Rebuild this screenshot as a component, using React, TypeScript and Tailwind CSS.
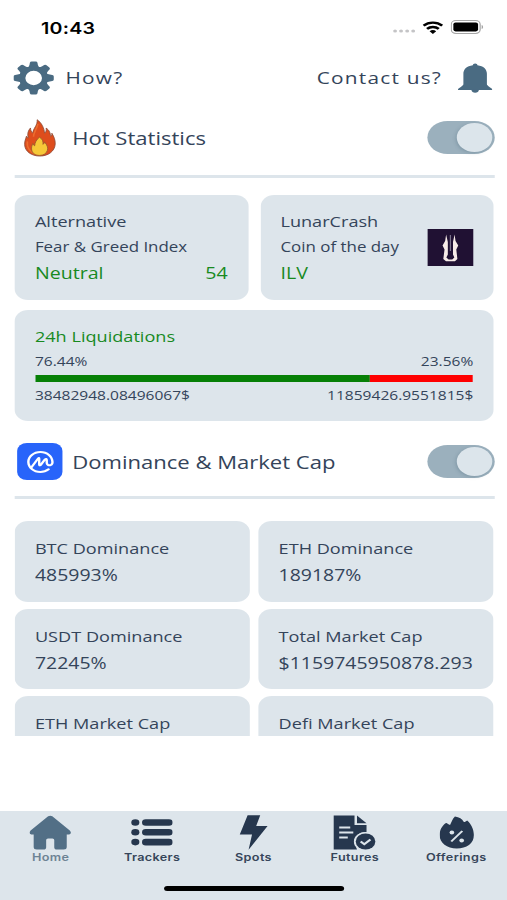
import type { ReactNode } from "react";
import { SiCoinmarketcap } from "react-icons/si";

interface Stat {
  label: string;
  value?: string;
}

const stats: Stat[] = [
  { label: "BTC Dominance", value: "485993%" },
  { label: "ETH Dominance", value: "189187%" },
  { label: "USDT Dominance", value: "72245%" },
  { label: "Total Market Cap", value: "$1159745950878.293" },
  { label: "ETH Market Cap" },
  { label: "Defi Market Cap" },
];

function StatusBar() {
  return (
    <div className="flex h-[54px] items-center justify-between pr-[19px] pl-[33.5px] text-black">
      <span className="mt-px font-['Inter',sans-serif] text-[16px] font-semibold tracking-[0.2px]">10:43</span>
      <div className="flex items-center">
        <svg width="18" height="12" viewBox="0 0 18 12" className="mt-[8px]">
          <g fill="#c4c4c6">
            <circle cx="1.6" cy="6" r="1.6" />
            <circle cx="6.5" cy="6" r="1.6" />
            <circle cx="11.5" cy="6" r="1.6" />
            <circle cx="16.4" cy="6" r="1.6" />
          </g>
        </svg>
        <svg width="17" height="13" viewBox="0 0 17 13" className="ml-[6px]">
          <g fill="none" stroke="#000" strokeWidth="2.3">
            <path d="M.9 4.6a11 11 0 0 1 15.2 0" />
            <path d="M3.7 7.9a7 7 0 0 1 9.6 0" />
          </g>
          <path d="M5.8 10.2a4 4 0 0 1 5.4 0L8.5 13z" />
        </svg>
        <svg width="27" height="14" viewBox="0 0 27 14" className="ml-[6px]">
          <rect x=".5" y=".6" width="23.6" height="12.8" rx="3.8" fill="none" stroke="#a6a6a6" />
          <rect x="2.2" y="2.6" width="20.2" height="8.8" rx="1.8" />
          <path d="M25.3 5v4c1.6-.6 1.6-3.4 0-4z" fill="#a6a6a6" />
        </svg>
      </div>
    </div>
  );
}

function GearIcon() {
  return (
    <svg width="33" height="34" viewBox="-16.5 -17 33 34" fill="#4a6b82">
      <path
        fillRule="evenodd"
        d="M-11.8 0a11.8 12 0 1 0 23.6 0a11.8 12 0 1 0-23.6 0zM-6.8 0a6.8 7.2 0 1 1 13.6 0a6.8 7.2 0 1 1-13.6 0z"
      />
      {[0, 45, 90, 135, 180, 225, 270, 315].map((angle) => (
        <path
          key={angle}
          transform={`rotate(${angle})`}
          d="M-5.2-10Q-3.6-11.2-3.4-13.2L-3.1-15.2Q-2.9-16.5-1.6-16.5H1.6Q2.9-16.5 3.1-15.2L3.4-13.2Q3.6-11.2 5.200-10z"
        />
      ))}
    </svg>
  );
}

function BellIcon() {
  return (
    <svg width="28" height="30" viewBox="0 0 28 30" fill="#4a6b82">
      <path d="M14 .6c1.200 0 1.700.9 1.900 1.700 4.900.8 7.700 4 7.700 8.500v10.200c0 1.200 1.200 2.200 4.400 5v1H0v-1c3.200-2.800 4.400-3.800 4.400-5V10.800c0-4.500 2.800-7.700 7.700-8.500.2-.8.700-1.700 1.900-1.700z" />
      <path d="M10.900 26.500h6.200c0 4.400-6.200 4.400-6.200 0z" />
    </svg>
  );
}

function FireIcon() {
  return (
    <svg width="27" height="38" viewBox="0 0 27 39">
      <path
        d="M11.300.8c3.900 3.300 5.700 8.200 6.200 13.800 1.300-1.200 1.700-3 1.300-5.200 3 2.200 3.400 5.200 3.800 8.500.9-.8 1.200-2 1-3.300 1.800 3.500 3 7.200 2.800 11.200C26 33 20.700 38 13.500 38S.8 33 .8 26c0-3.500.9-5.500 1.500-8.300.4.700.9 1.300 1.500 1.700-.8-4.300-.3-7.300 1.900-10.200.1 2.300.6 4 1.900 5.300C7.900 9.400 11.800 6.700 11.300.8z"
        fill="#de4d1d"
        stroke="#8f4c38"
        strokeWidth=".8"
      />
      <path d="M11.900 5c-.6 5-3.600 8-3.700 13.300M3.100 23c-.8 6.500 2.700 11.500 7 13" fill="none" stroke="#f27a36" strokeWidth="1.300" opacity=".7" />
      <path
        d="M13.200 18.700c2.400 1.500 3.300 4.200 3 7.300.8-.6 1.200-1.500 1.200-2.500 2.200 3 3.200 5.800 2.500 8.600-.8 3.400-3.300 5.300-6.700 5.300s-6.100-2.300-6.500-5.600c-.4-2.700.2-4.700 1-6.700.2 1.100.7 1.900 1.500 2.400.2-3.500 1.400-6.300 4-8.800z"
        fill="#f6c838"
        stroke="#9b5a2d"
        strokeWidth=".8"
      />
    </svg>
  );
}

function IlluviumLogo() {
  return (
    <svg width="37.500" height="37" viewBox="0 0 37.500 37">
      <rect width="37.500" height="37" fill="#201133" />
      <path
        d="M15.300 5.500L16.700 13V25.500L15.500 28.500L17.300 30.500H20.300L22 28.500L20.900 25.500V13L22.200 5.500L23 12L25.200 16.500L23.600 20.500L24.500 30L22.500 32.200H15.200L13 30L14 20.500L12.400 16.500L14.500 12z"
        fill="#f7ece8"
      />
      <path d="M18.800 6v16" stroke="#79718a" />
    </svg>
  );
}

function Toggle() {
  return (
    <div className="flex h-[33px] w-[54.200px] items-center justify-end rounded-full bg-[#9bb0bd] pr-[1.800px]">
      <div className="h-[29.500px] w-[28.800px] rounded-full bg-[#dce5eb] shadow-[-1px_1px_3px_rgba(60,90,110,0.25)]" />
    </div>
  );
}

function SectionHeader({ icon, title }: { icon: ReactNode; title: string }) {
  return (
    <div className="mr-[10.500px] ml-[11.500px] flex h-[41px] items-center">
      <div className="flex w-[42px] items-center justify-center">{icon}</div>
      <h2 className="ml-[5.500px] text-[18px] leading-6">{title}</h2>
      <div className="ml-auto">
        <Toggle />
      </div>
    </div>
  );
}

function Divider() {
  return <div className="mr-[10.500px] ml-[11.500px] h-[3px] bg-[#dde5eb]" />;
}

function Liquidations() {
  return (
    <div className="mt-[10px] flex h-[111px] flex-col rounded-[11px] bg-[#dde5eb] px-[16.500px] pt-[15px]">
      <div className="text-[14.800px] leading-[22px] text-[#188a1f]">24h Liquidations</div>
      <div className="mt-px flex justify-between text-[12.700px] leading-[26px]">
        <span>76.44%</span>
        <span>23.56%</span>
      </div>
      <div className="mt-px flex h-[6.500px]">
        <div className="bg-[#068006]" style={{ width: "76.44%" }} />
        <div className="bg-[#ff0000]" style={{ width: "23.56%" }} />
      </div>
      <div className="mt-px flex justify-between text-[12.700px] leading-[24px]">
        <span>38482948.08496067$</span>
        <span>11859426.9551815$</span>
      </div>
    </div>
  );
}

function TabItem({ label, active, children }: { label: string; active?: boolean; children: ReactNode }) {
  return (
    <div className="flex w-[82.800px] flex-col items-center">
      <div className="flex h-[36px] items-center justify-center">{children}</div>
      <span className={`text-[10.300px] leading-[14px] font-semibold tracking-[0.300px] ${active ? "text-[#6d8394]" : "text-[#36455a]"}`}>
        {label}
      </span>
    </div>
  );
}

function TabBar() {
  return (
    <nav className="flex h-[89px] flex-col bg-[#dde5eb] font-['Inter',sans-serif]">
      <div className="flex pt-[3px]">
        <TabItem label="Home" active>
          <svg width="34" height="35" viewBox="0 0 34 35" fill="#526f86">
            <path d="M15.300 1.300Q17 0 18.700 1.300L33 15.500Q35 18.500 32.500 19.500H30.500V32Q30.500 34.500 28 34.500H22.500Q20.300 34.500 20.300 32.200V25Q20.300 23.500 18.800 23.500H15.200Q13.700 23.500 13.700 25V32.200Q13.700 34.500 11.500 34.500H6Q3.500 34.500 3.500 32V19.500H1.500Q-1 18.500 1 15.500z" />
          </svg>
        </TabItem>
        <TabItem label="Trackers">
          <svg width="34" height="27" viewBox="0 0 34 27" fill="#26374e">
            {[3.500, 13.300, 23.100].map((y) => (
              <g key={y}>
                <circle cx="3.500" cy={y} r="3.300" />
                <rect x="9" y={y - 3.300} width="25" height="6.600" rx="3" />
              </g>
            ))}
          </svg>
        </TabItem>
        <TabItem label="Spots">
          <svg width="24" height="35" viewBox="0 0 24 35" fill="#26374e">
            <path d="M7.200.3H17.500L14.200 11H23.500L8 34.700L10.800 19.500H.8z" />
          </svg>
        </TabItem>
        <TabItem label="Futures">
          <svg width="35" height="35" viewBox="0 0 35 35">
            <path d="M.5 .5H17.500V10H27.300V17A9.500 9.500 0 0 0 18.500 31L19.500 34.500H.5z" fill="#26374e" />
            <path d="M19.500.5L27.300 8.200H19.500z" fill="#26374e" />
            <path d="M5 12.500H14M5 17.500H16.500M5 22.500H12" stroke="#dde5eb" strokeWidth="1.800" />
            <circle cx="26.500" cy="26.500" r="9.500" fill="#dde5eb" />
            <circle cx="26.500" cy="26.500" r="8" fill="#26374e" />
            <path d="M22.500 26.500l3 2.800 5-4.800" fill="none" stroke="#dde5eb" strokeWidth="1.900" />
          </svg>
        </TabItem>
        <TabItem label="Offerings">
          <svg width="28" height="33" viewBox="0 0 28 33">
            <path
              d="M12.500 .5C16 1 18.500 3 19.500 5.500Q20 6.500 21.200 5.500L22.500 4.500C25.500 7.500 28 13.500 28 19C28 27.500 22 32.500 14 32.500S0 27 0 19C0 14 2 10 4.500 7.500Q5.500 6.500 6.800 8L8.500 9C10 5.500 10.500 2.500 12.500 .5z"
              fill="#26374e"
            />
            <path d="M18.500 15L9.500 25.500" stroke="#dde5eb" strokeWidth="1.800" />
            <circle cx="10" cy="16.500" r="1.900" fill="#dde5eb" />
            <circle cx="18" cy="24.500" r="1.900" fill="#dde5eb" />
          </svg>
        </TabItem>
      </div>
      <div className="mx-auto mt-[22px] h-[5px] w-[147px] rounded-full bg-black" />
    </nav>
  );
}

export default function App() {
  return (
    <div className="h-[900px] w-[507px] overflow-hidden bg-white">
      {/* 414pt wide phone layout, stretched to the full window width */}
      <div className="flex h-[900px] w-[414px] origin-top-left scale-x-[1.2246] flex-col font-['Open_Sans',sans-serif] text-[#34445a]">
        <StatusBar />
        <div className="flex h-[48px] items-center pr-[12px] pl-[10.500px] text-[17px] tracking-[1px]">
          <GearIcon />
          <span className="ml-[10px]">How?</span>
          <span className="mr-[13px] ml-auto">Contact us?</span>
          <BellIcon />
        </div>

        <div className="mt-[15px]">
          <SectionHeader icon={<FireIcon />} title="Hot Statistics" />
        </div>
        <div className="mt-[17px]">
          <Divider />
        </div>

        <div className="mr-[11px] ml-[12px] mt-[17px]">
          <div className="flex gap-[10px]">
            <div className="h-[105px] flex-1 rounded-[11px] bg-[#dde5eb] px-[16.500px] pt-[13px]">
              <div className="text-[14.800px] leading-[26px]">Alternative</div>
              <div className="text-[13.800px] leading-[25px]">Fear &amp; Greed Index</div>
              <div className="mt-px flex justify-between text-[16px] leading-[26px] text-[#188a1f]">
                <span>Neutral</span>
                <span>54</span>
              </div>
            </div>
            <div className="flex h-[105px] flex-1 justify-between rounded-[11px] bg-[#dde5eb] px-[16.500px] pt-[13px]">
              <div>
                <div className="text-[14.800px] leading-[26px]">LunarCrash</div>
                <div className="text-[13.800px] leading-[25px]">Coin of the day</div>
                <div className="mt-px text-[16px] leading-[26px] text-[#188a1f]">ILV</div>
              </div>
              <div className="mt-[21px]">
                <IlluviumLogo />
              </div>
            </div>
          </div>
          <Liquidations />
        </div>

        <div className="mt-[20px]">
          <SectionHeader
            icon={
              <div className="flex h-[37px] w-[37.500px] items-center justify-center rounded-[8px] bg-[#2864fa]">
                <SiCoinmarketcap className="size-[22px] text-white" />
              </div>
            }
            title="Dominance & Market Cap"
          />
        </div>
        <div className="mt-[14px]">
          <Divider />
        </div>

        <div className="mt-[22px] mr-[11px] ml-[12px] grid h-[215px] shrink-0 grid-cols-2 content-start gap-x-[7px] gap-y-[7px] overflow-hidden">
          {stats.map((s) => (
            <div key={s.label} className="h-[80.500px] rounded-[11px] bg-[#dde5eb] pt-[14px] pl-[16.500px]">
              <div className="text-[14.800px] leading-[26px]">{s.label}</div>
              {s.value && <div className="text-[15.900px] leading-[28px]">{s.value}</div>}
            </div>
          ))}
        </div>

        <div className="mt-auto">
          <TabBar />
        </div>
      </div>
    </div>
  );
}
